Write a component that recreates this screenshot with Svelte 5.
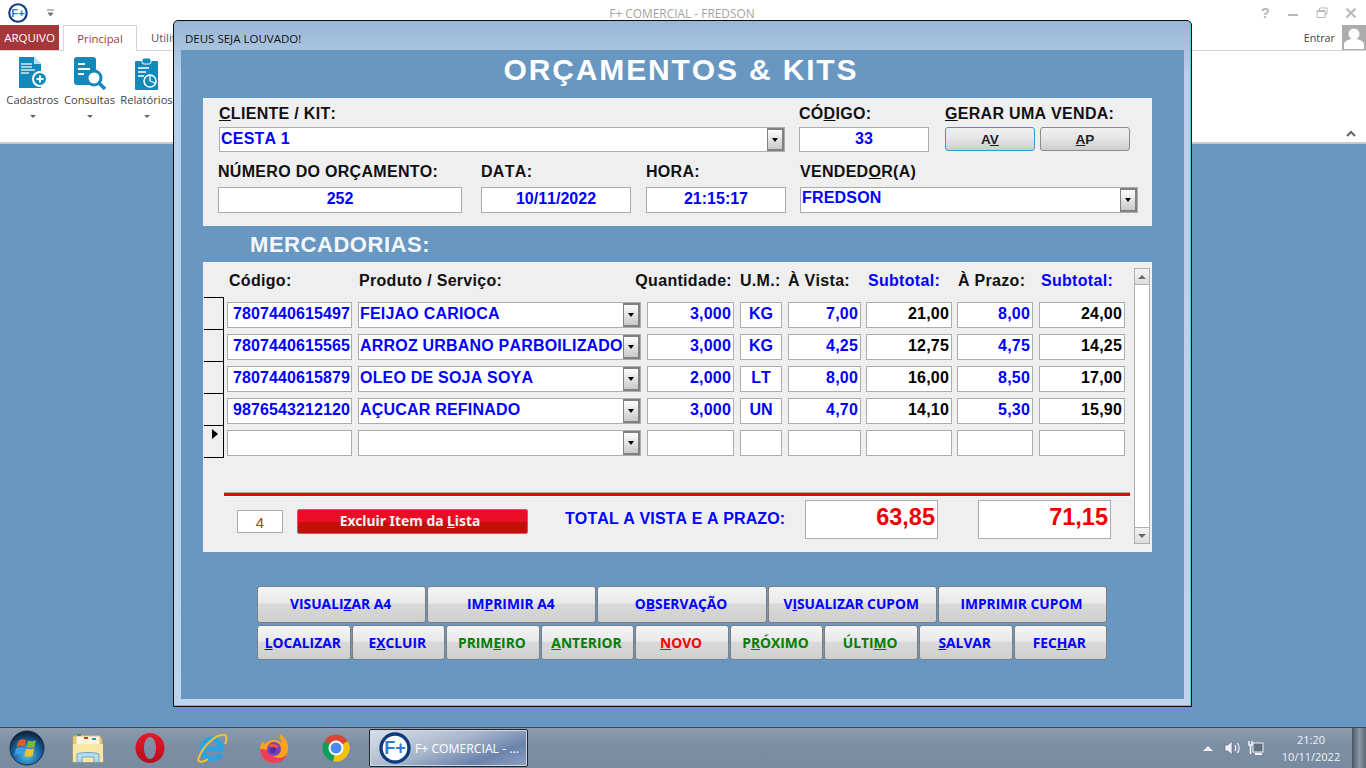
<script lang="ts">
  type Item = { code: string; name: string; qty: string; um: string; cash: string; cashSub: string; term: string; termSub: string }

  const items: Item[] = [
    { code: '7807440615497', name: 'FEIJAO CARIOCA', qty: '3,000', um: 'KG', cash: '7,00', cashSub: '21,00', term: '8,00', termSub: '24,00' },
    { code: '7807440615565', name: 'ARROZ URBANO PARBOILIZADO', qty: '3,000', um: 'KG', cash: '4,25', cashSub: '12,75', term: '4,75', termSub: '14,25' },
    { code: '7807440615879', name: 'OLEO DE SOJA SOYA', qty: '2,000', um: 'LT', cash: '8,00', cashSub: '16,00', term: '8,50', termSub: '17,00' },
    { code: '9876543212120', name: 'AÇUCAR REFINADO', qty: '3,000', um: 'UN', cash: '4,70', cashSub: '14,10', term: '5,30', termSub: '15,90' },
    { code: '', name: '', qty: '', um: '', cash: '', cashSub: '', term: '', termSub: '' },
  ]

  // "_" marks the access key letter
  const topButtons = ['VISUALI_ZAR A4', 'IM_PRIMIR A4', 'O_BSERVAÇÃO', 'V_ISUALIZAR CUPOM', 'IMPRIMIR CUPOM']
  const navButtons = [
    { label: '_LOCALIZAR', tone: 'blue' },
    { label: 'E_XCLUIR', tone: 'blue' },
    { label: 'PRIM_EIRO', tone: 'green' },
    { label: '_ANTERIOR', tone: 'green' },
    { label: '_NOVO', tone: 'red' },
    { label: 'P_RÓXIMO', tone: 'green' },
    { label: 'ÚLTI_MO', tone: 'green' },
    { label: '_SALVAR', tone: 'blue' },
    { label: 'FEC_HAR', tone: 'blue' },
  ]

  function parts(label: string) {
    const i = label.indexOf('_')
    if (i < 0) return [label, '', '']
    return [label.slice(0, i), label[i + 1], label.slice(i + 2)]
  }
</script>

{#snippet key(label: string)}
  {@const p = parts(label)}
  {p[0]}<u>{p[1]}</u>{p[2]}
{/snippet}

{#snippet combo(text: string, cls: string)}
  <div class="field combo {cls}">
    <span class="combo-text">{text}</span>
    <span class="drop"><i></i></span>
  </div>
{/snippet}

{#snippet logo(size: number)}
  <svg width={size} height={size} viewBox="0 0 32 32">
    <circle cx="16" cy="16" r="14" fill="#fff" stroke="#0d3b82" stroke-width="3.4" />
    <text x="16" y="22" text-anchor="middle" font-family="Liberation Sans" font-weight="700" font-size="18" fill="#2a7bd8">F+</text>
  </svg>
{/snippet}

<div class="screen">
  <header class="titlebar">
    <div class="qat">
      {@render logo(20)}
      <svg class="qat-more" width="9" height="9" viewBox="0 0 9 9"><path d="M1 2h7M2 5h5L4.500 8z" stroke="#777" fill="#777" stroke-width="1" /></svg>
    </div>
    <span class="app-title">F+ COMERCIAL - FREDSON</span>
    <div class="win-ctrl">
      <span class="help">?</span>
      <svg width="12" height="12" viewBox="0 0 12 12"><rect x="1" y="7" width="10" height="2" fill="#b8b8b8" /></svg>
      <svg width="12" height="12" viewBox="0 0 12 12"><path d="M3.500 3V1h7.500v6H9M1 3.500h8v7H1z" fill="none" stroke="#b8b8b8" /><rect x="1" y="3" width="8" height="2" fill="#b8b8b8" /></svg>
      <svg width="12" height="12" viewBox="0 0 12 12"><path d="M1.500 1.500l9 9M10.500 1.500l-9 9" stroke="#b8b8b8" stroke-width="2" /></svg>
    </div>
  </header>

  <nav class="tabs">
    <span class="tab-file">ARQUIVO</span>
    <span class="tab-on">Principal</span>
    <span class="tab">Utilitários</span>
    <span class="user">Entrar</span>
    <span class="avatar">
      <svg width="24" height="24" viewBox="0 0 24 24"><circle cx="12" cy="9" r="5.500" fill="#fff" /><path d="M2 24v-4c0-4 4-5 7-6h6c3 1 7 2 7 6v4z" fill="#fff" /></svg>
    </span>
  </nav>

  <section class="ribbon">
    <div class="rb-item">
      <svg width="30" height="33" viewBox="0 0 30 33">
        <path d="M1 0h15l7 7v24H1z" fill="#1289ba" />
        <path d="M16 0l7 7h-7z" fill="#bfe0ee" />
        <path d="M3 7h11M3 10h11M3 13h14M3 16h8" stroke="#cfe8f2" stroke-width="1.300" />
        <circle cx="22" cy="22" r="7" fill="#1289ba" stroke="#fff" stroke-width="2" />
        <path d="M18.500 22h7M22 18.500v7" stroke="#fff" stroke-width="2" />
      </svg>
      <span>Cadastros</span>
      <i class="caret"></i>
    </div>
    <div class="rb-item">
      <svg width="32" height="33" viewBox="0 0 32 33">
        <rect x="0" y="0" width="22" height="28" rx="3" fill="#1289ba" />
        <path d="M4 7h7M4 12h12M4 17h6" stroke="#fff" stroke-width="2" />
        <circle cx="20" cy="21" r="7" fill="#fff" stroke="#1289ba" stroke-width="3" />
        <path d="M25 26l6 6" stroke="#1289ba" stroke-width="3.500" />
      </svg>
      <span>Consultas</span>
      <i class="caret"></i>
    </div>
    <div class="rb-item">
      <svg width="26" height="33" viewBox="0 0 26 33">
        <rect x="1" y="4" width="23" height="29" rx="1" fill="#1289ba" />
        <rect x="8" y="1" width="9" height="6" rx="2" fill="#1289ba" stroke="#fff" />
        <path d="M4 11h11M4 15h8M4 19h6" stroke="#fff" stroke-width="1.500" />
        <circle cx="16" cy="24" r="6" fill="none" stroke="#fff" stroke-width="1.500" />
        <path d="M16 24v-6M16 24l5 2" stroke="#fff" stroke-width="1.300" />
      </svg>
      <span>Relatórios</span>
      <i class="caret"></i>
    </div>
    <svg class="collapse" width="10" height="7" viewBox="0 0 10 7"><path d="M1 6l4-4 4 4" fill="none" stroke="#666" stroke-width="2" /></svg>
  </section>

  <main class="desktop"></main>

  <footer class="taskbar">
    <span class="orb">
      <svg width="36" height="36" viewBox="0 0 36 36">
        <defs>
          <radialGradient id="orbfill" cx="50%" cy="70%" r="65%">
            <stop offset="0" stop-color="#57c3ea" />
            <stop offset="0.6" stop-color="#17639f" />
            <stop offset="1" stop-color="#10233f" />
          </radialGradient>
        </defs>
        <circle cx="18" cy="18" r="17" fill="url(#orbfill)" stroke="#1a2d45" />
        <path d="M9 11c3-2 6-2 8-1l-1.500 6.500c-2-1-5-1-8 .5z" fill="#e85a2a" />
        <path d="M19 10.500c3 1 5 1 8-.5l-1.500 7c-3 1.300-5 1-8 0z" fill="#7db63c" />
        <path d="M7 18.500c3-1.500 5-1.500 8-.5l-1.500 7c-3-1-5-1-8 .5z" fill="#3b9fe0" />
        <path d="M17 18.500c3 1 5 1 8 0L23.500 26c-3 1.200-5 1-8 0z" fill="#f3c22d" />
      </svg>
    </span>
    <span class="app">
      <svg width="32" height="32" viewBox="0 0 32 32">
        <path d="M1 4h11l2 2h16l1 24H1z" fill="#ecd27f" stroke="#c2a75c" />
        <rect x="4" y="4" width="24" height="9" fill="#fbf5d9" stroke="#d4c48c" />
        <rect x="5" y="2" width="4" height="2" fill="#31a34a" />
        <rect x="12" y="5" width="4" height="2" fill="#c8392b" />
        <rect x="20" y="6" width="4" height="2" fill="#2a8fd6" />
        <path d="M1 12h30v18H1z" fill="#f8e7a6" />
        <path d="M5 22c4-2 18-2 22 0v8h-5v-5H10v5H5z" fill="#b5dcf0" stroke="#6da6c9" />
      </svg>
    </span>
    <span class="app">
      <svg width="30" height="32" viewBox="0 0 30 32">
        <defs>
          <linearGradient id="operared" x1="0" y1="0" x2="0" y2="1">
            <stop offset="0" stop-color="#e21a2a" />
            <stop offset="1" stop-color="#b80f1c" />
          </linearGradient>
        </defs>
        <path d="M15 1c8 0 14.500 6.500 14.500 15S23 31 15 31 .500 24.500 .500 16 7 1 15 1zm0 4c-3.500 0-6 5-6 11s2.500 11 6 11 6-5 6-11-2.500-11-6-11z" fill="url(#operared)" fill-rule="evenodd" />
      </svg>
    </span>
    <span class="app">
      <svg width="32" height="32" viewBox="0 0 32 32">
        <path d="M8 17h17c0-6-4-10-9-10s-10 4-10 10 5 10 10 10c4 0 7-1.500 9-5" fill="none" stroke="#2ba3e3" stroke-width="5" />
        <path d="M29 3C21 1 6 14 2 28c1 3 6 2 10-1M29 3c2 1 2 5 0 9" fill="none" stroke="#f2c22d" stroke-width="2" />
      </svg>
    </span>
    <span class="app">
      <svg width="32" height="32" viewBox="0 0 32 32">
        <path d="M22 2c6 4 9 10 8 16-1 8-7 13-14 13C8 31 2 25 2 17c0-3 1-6 3-8 0 2 1 3 2 3 2-3 6-4 8-4 3 0 7 1 9 3-1-4-3-6-2-9z" fill="#f9a21a" />
        <path d="M2 17c0 8 6 14 14 14 6 0 11-3 13-9-3 4-8 5-12 3-4-1-6-4-6-7z" fill="#ee3e5c" />
        <circle cx="16" cy="17" r="7" fill="#7a3fc1" />
        <path d="M10 13c4-2 9-1 11 2l-5 1c-2-1-4-1-6-3z" fill="#f25a2c" />
        <circle cx="15" cy="18" r="3" fill="#4a2fa8" />
      </svg>
    </span>
    <span class="app">
      <svg width="30" height="30" viewBox="0 0 30 30">
        <path d="M15 15L3.300 8.200A13.500 13.500 0 0 1 26.700 8.200z" fill="#db4437" />
        <path d="M15 15L26.700 8.200A13.500 13.500 0 0 1 12 28.200z" fill="#f4c20d" />
        <path d="M15 15L12 28.200A13.500 13.500 0 0 1 3.300 8.200z" fill="#0f9d58" />
        <circle cx="15" cy="15" r="6.500" fill="#4a8bf0" stroke="#fff" stroke-width="2" />
      </svg>
    </span>
    <div class="task-btn">
      {@render logo(32)}
      <span>F+ COMERCIAL - ...</span>
    </div>
    <div class="tray">
      <svg width="10" height="6" viewBox="0 0 10 6"><path d="M0 6l5-5 5 5z" fill="#f2f2f2" /></svg>
      <svg class="speaker" width="17" height="16" viewBox="0 0 17 16"><path d="M1 5h3l4-4v14l-4-4H1z" fill="#eef2f6" stroke="#59606a" stroke-width=".6" /><path d="M11 5c1 2 1 4 0 6M13.500 3c2 3 2 7 0 10" fill="none" stroke="#eef2f6" stroke-width="1.200" /></svg>
      <svg class="net" width="16" height="16" viewBox="0 0 16 16"><rect x="5" y="3" width="10" height="9" fill="#5f7080" stroke="#f2f2f2" /><path d="M7 14h7" stroke="#f2f2f2" stroke-width="2" /><path d="M1 1v4h3V1M2.500 5v9" fill="none" stroke="#f2f2f2" stroke-width="1.500" /></svg>
      <div class="clock"><span>21:20</span><span>10/11/2022</span></div>
      <span class="show-desk"></span>
    </div>
  </footer>

  <article class="window">
    <div class="win-title">DEUS SEJA LOUVADO!</div>
    <div class="client">
      <h1>ORÇAMENTOS &amp; KITS</h1>

      <section class="panel head-panel">
        <div class="row-a">
          <div class="col">
            <span class="lbl"><u>C</u>LIENTE / KIT:</span>
            {@render combo('CESTA 1', '')}
          </div>
          <div class="col">
            <span class="lbl">CÓ<u>D</u>IGO:</span>
            <div class="field center">33</div>
          </div>
          <div class="col">
            <span class="lbl"><u>G</u>ERAR UMA VENDA:</span>
            <div class="sale">
              <button type="button" class="sale-btn focus">A<u>V</u></button>
              <button type="button" class="sale-btn"><u>A</u>P</button>
            </div>
          </div>
        </div>
        <div class="row-b">
          <div class="col">
            <span class="lbl">NÚMERO DO ORÇAMENTO:</span>
            <div class="field center">252</div>
          </div>
          <div class="col">
            <span class="lbl">DATA:</span>
            <div class="field center">10/11/2022</div>
          </div>
          <div class="col">
            <span class="lbl">HORA:</span>
            <div class="field center">21:15:17</div>
          </div>
          <div class="col">
            <span class="lbl">VENDED<u>O</u>R(A)</span>
            {@render combo('FREDSON', '')}
          </div>
        </div>
      </section>

      <h2>MERCADORIAS:</h2>

      <section class="panel list-panel">
        <div class="list">
          <div class="cells heads">
            <span class="h" style="padding-left: 2px">Código:</span>
            <span class="h" style="padding-left: 1px">Produto / Serviço:</span>
            <span class="h end">Quantidade:</span>
            <span class="h">U.M.:</span>
            <span class="h">À Vista:</span>
            <span class="h b" style="padding-left: 2px">Subtotal:</span>
            <span class="h" style="padding-left: 1px">À Prazo:</span>
            <span class="h b" style="padding-left: 2px">Subtotal:</span>
          </div>
          {#each items as it, i}
            <div class="item">
              <div class="selector" class:last={i === items.length - 1}>
                {#if i === items.length - 1}<i class="arrow"></i>{/if}
              </div>
              <div class="cells">
                <div class="field code">{it.code}</div>
                {@render combo(it.name, 'prod')}
                <div class="field num">{it.qty}</div>
                <div class="field center">{it.um}</div>
                <div class="field num">{it.cash}</div>
                <div class="field num dark">{it.cashSub}</div>
                <div class="field num">{it.term}</div>
                <div class="field num dark">{it.termSub}</div>
              </div>
            </div>
          {/each}
          <div class="rule"></div>
          <div class="totals">
            <div class="count">4</div>
            <button type="button" class="del">Excluir Item da <u>L</u>ista</button>
            <span class="total-lbl">TOTAL A VISTA E A PRAZO:</span>
            <div class="sum">63,85</div>
            <div class="sum">71,15</div>
          </div>
        </div>
        <div class="scroll">
          <span class="sb-btn"><i class="up"></i></span>
          <span class="sb-btn"><i class="down"></i></span>
        </div>
      </section>

      <div class="actions top">
        {#each topButtons as b}
          <button type="button" class="act blue">{@render key(b)}</button>
        {/each}
      </div>
      <div class="actions nav">
        {#each navButtons as b}
          <button type="button" class="act {b.tone}">{@render key(b.label)}</button>
        {/each}
      </div>
    </div>
  </article>
</div>

<style>
  :global(body) {
    margin: 0;
  }
  .screen {
    position: relative;
    width: 1366px;
    height: 768px;
    overflow: hidden;
    display: flex;
    flex-direction: column;
    background: #fff;
    font-family: 'Open Sans', sans-serif;
  }

  /* office style shell */
  .titlebar {
    height: 25px;
    display: flex;
    align-items: center;
    justify-content: space-between;
    padding: 0 9px 0 8px;
    position: relative;
  }
  .qat {
    display: flex;
    align-items: center;
    gap: 18px;
  }
  .app-title {
    position: absolute;
    left: 0;
    right: 0;
    text-align: center;
    font-size: 11.9px;
    color: #a3a3a3;
    padding-right: 2px;
  }
  .win-ctrl {
    display: flex;
    align-items: center;
    gap: 17px;
  }
  .help {
    font: 700 15px 'Liberation Sans', sans-serif;
    color: #b8b8b8;
  }
  .tabs {
    height: 25px;
    display: flex;
    align-items: stretch;
    border-bottom: 1px solid #d4d4d4;
    font-size: 11.3px;
    position: relative;
  }
  .tab-file {
    width: 59px;
    height: 25px;
    background: #a4373a;
    color: #fff;
    display: flex;
    align-items: center;
    justify-content: center;
    font-size: 11.5px;
  }
  .tab-on {
    width: 72px;
    height: 25px;
    margin-left: 4px;
    border: 1px solid #d4d4d4;
    border-bottom: none;
    background: #fff;
    color: #a4373a;
    display: flex;
    align-items: center;
    justify-content: center;
  }
  .tab {
    margin-left: 14px;
    color: #555;
    display: flex;
    align-items: center;
  }
  .user {
    margin-left: auto;
    color: #444;
    font-size: 10.8px;
    display: flex;
    align-items: center;
  }
  .avatar {
    width: 24px;
    height: 25px;
    margin-left: 7px;
    background: #acacac;
    overflow: hidden;
  }
  .ribbon {
    display: flex;
    position: relative;
    padding-left: 4px;
    border-bottom: 2px solid #c9c9c9;
    box-sizing: border-box;
    height: 93px;
  }
  .rb-item {
    width: 57px;
    padding-top: 6px;
    display: flex;
    flex-direction: column;
    align-items: center;
    font-size: 11.2px;
    color: #444;
  }
  .rb-item span {
    margin-top: 2px;
    line-height: 16px;
    white-space: nowrap;
  }
  .caret {
    margin-top: 7px;
    border: 3px solid transparent;
    border-top: 3px solid #666;
    border-bottom: none;
  }
  .collapse {
    position: absolute;
    right: 10px;
    bottom: 5px;
  }
  .desktop {
    flex: 1;
    background: #6897c2;
  }
  .taskbar {
    height: 41px;
    box-sizing: border-box;
    border-top: 1px solid #3d4855;
    background: linear-gradient(#8b9cae, #7c8ea3 45%, #798ba0);
    display: flex;
    align-items: center;
    color: #fff;
  }
  .orb {
    width: 36px;
    margin-left: 9px;
    display: flex;
  }
  .app {
    width: 62px;
    display: flex;
    justify-content: center;
  }
  .app:nth-child(2) {
    margin-left: 12px;
  }
  .task-btn {
    margin-left: 2px;
    width: 159px;
    height: 38px;
    flex: none;
    box-sizing: border-box;
    border: 1px solid #20262e;
    border-radius: 2px;
    outline: 1px solid #cfd8e3;
    outline-offset: -2px;
    background: linear-gradient(160deg, #d9e0ea, #a9b7cc 45%, #6b83ad 75%, #8da0c0);
    display: flex;
    align-items: center;
    gap: 4px;
    padding-left: 9px;
    font-size: 12.2px;
    white-space: nowrap;
    overflow: hidden;
    color: #fff;
  }
  .tray {
    margin-left: auto;
    display: flex;
    align-items: center;
    height: 100%;
  }
  .speaker {
    margin-left: 11px;
  }
  .net {
    margin-left: 7px;
  }
  .clock {
    width: 82px;
    margin-left: 6px;
    display: flex;
    flex-direction: column;
    align-items: center;
    font-size: 11px;
    line-height: 17px;
    color: #eef2f6;
  }
  .show-desk {
    width: 13px;
    height: 100%;
    border-left: 1px solid #48535f;
    background: linear-gradient(90deg, #56616e, #8b97a5 50%, #5c6773);
  }

  /* the form window */
  .window {
    position: absolute;
    left: 173px;
    top: 20px;
    width: 1019px;
    height: 687px;
    box-sizing: border-box;
    border: 1px solid #0c0c0c;
    border-radius: 5px 5px 0 0;
    box-shadow: inset -1px -1px 0 #55c6ea;
    background: linear-gradient(#9ab6d5, #b5d0ea 8%, #bcd5ec);
    padding: 0 7px 7px;
    display: flex;
    flex-direction: column;
  }
  .win-title {
    height: 29px;
    line-height: 35px;
    padding-left: 4px;
    font-size: 11.5px;
    color: #111;
    white-space: nowrap;
  }
  .client {
    flex: 1;
    background: #6897c2;
    font-family: 'Liberation Sans', Arial, sans-serif;
    font-kerning: none;
    padding: 0 32px 0 22px;
    display: flex;
    flex-direction: column;
  }
  h1 {
    margin: 0;
    height: 48px;
    line-height: 40px;
    text-align: center;
    font-size: 30px;
    font-weight: 700;
    color: #fff;
    letter-spacing: 1.85px;
    padding-left: 7px;
  }
  h2 {
    margin: 0;
    height: 36px;
    line-height: 38px;
    padding-left: 47px;
    font-size: 22px;
    color: #f4f7fa;
    font-weight: 700;
    letter-spacing: .55px;
  }
  .panel {
    background: #efefef;
    width: 949px;
    flex: none;
    box-sizing: border-box;
  }
  .lbl {
    height: 24px;
    line-height: 22px;
    font-size: 16px;
    font-weight: 700;
    color: #111;
    white-space: nowrap;
    letter-spacing: .3px;
  }
  .col {
    display: flex;
    flex-direction: column;
    min-width: 0;
    box-sizing: border-box;
  }
  .head-panel {
    height: 128px;
    padding-top: 5px;
  }
  .row-a {
    display: grid;
    grid-template-columns: 580px 146px 185px;
    padding-left: 16px;
  }
  .row-a .col:nth-child(1) {
    padding-right: 14px;
  }
  .row-a .col:nth-child(2) {
    padding-right: 16px;
  }
  .row-a .field {
    height: 25px;
  }
  .row-b {
    display: grid;
    grid-template-columns: 263px 165px 154px 338px;
    margin-top: 9px;
    padding-left: 15px;
  }
  .row-b .col:nth-child(1) {
    padding-right: 19px;
  }
  .row-b .col:nth-child(2) {
    padding-right: 15px;
  }
  .row-b .col:nth-child(3) {
    padding-right: 14px;
  }
  .row-b .lbl {
    height: 26px;
  }
  .row-b .combo {
    line-height: 20px;
  }
  .field {
    height: 26px;
    box-sizing: border-box;
    border: 1px solid #acacac;
    background: #fff;
    color: #0000ff;
    font-size: 16px;
    font-weight: 700;
    line-height: 22px;
    white-space: nowrap;
    overflow: hidden;
  }
  .center {
    text-align: center;
  }
  .num {
    text-align: right;
    padding-right: 2px;
    letter-spacing: .2px;
  }
  .dark {
    color: #000;
  }
  .code {
    padding-left: 5px;
    letter-spacing: .1px;
  }
  .combo {
    display: flex;
    align-items: stretch;
    padding-left: 1px;
    letter-spacing: .2px;
  }
  .combo-text {
    flex: 1;
    min-width: 0;
    overflow: hidden;
  }
  .drop {
    width: 17px;
    flex: none;
    box-sizing: border-box;
    border: 2px solid #808080;
    border-left-width: 1px;
    background: linear-gradient(#fdfdfd, #c9c9c9);
    display: flex;
    align-items: center;
    justify-content: center;
  }
  .drop i {
    border: 3.5px solid transparent;
    border-top: 4px solid #000;
    border-bottom: none;
  }
  .sale {
    display: flex;
    gap: 5px;
  }
  .sale-btn {
    width: 90px;
    height: 24px;
    padding: 0;
    box-sizing: border-box;
    border: 1px solid #8c8c8c;
    border-radius: 3px;
    background: linear-gradient(#f0f0f0, #e6e6e6 45%, #cdcdcd);
    font: 700 13.500px 'Liberation Sans', sans-serif;
    color: #222;
  }
  .sale-btn.focus {
    border-color: #2f9fd0;
  }

  .list-panel {
    height: 290px;
    display: flex;
    padding-left: 1px;
  }
  .list {
    width: 926px;
    flex: none;
  }
  .cells {
    display: grid;
    grid-template-columns: 125px 283px 87px 42px 73px 85px 75px 86px;
    column-gap: 6px;
    padding-left: 3px;
    padding-top: 5px;
  }
  .cells > :nth-child(6),
  .cells > :nth-child(7) {
    margin-left: -1px;
  }
  .heads {
    height: 35px;
    box-sizing: border-box;
    padding-top: 9px;
    margin-left: 20px;
  }
  .h {
    font-size: 16px;
    font-weight: 700;
    line-height: 20px;
    color: #111;
    white-space: nowrap;
    letter-spacing: .3px;
  }
  .h.b {
    color: #0000ff;
  }
  .h.end {
    justify-self: end;
    padding-right: 2px;
  }
  .item {
    display: flex;
    height: 32px;
  }
  .selector {
    position: relative;
    width: 20px;
    height: 32px;
    box-sizing: border-box;
    border-top: 1px solid #000;
    border-right: 1px solid #000;
  }
  .selector.last {
    height: 33px;
    border-bottom: 1px solid #000;
  }
  .arrow {
    position: absolute;
    left: 8px;
    top: 3px;
    border: 5px solid transparent;
    border-left: 6px solid #000;
    border-right: none;
  }
  .rule {
    margin: 35px 0 0 20px;
    height: 5px;
    box-sizing: border-box;
    background: #f40000;
    border-top: 1px solid #a9a9a9;
    border-bottom: 1px solid #fff;
  }
  .totals {
    display: flex;
    align-items: flex-start;
    height: 40px;
    margin-top: 3px;
    padding-left: 33px;
  }
  .count {
    width: 46px;
    height: 23px;
    flex: none;
    margin-top: 10px;
    box-sizing: border-box;
    border: 1px solid #acacac;
    background: #fff;
    text-align: center;
    line-height: 23px;
    font-size: 15px;
    color: #c8360e;
  }
  .del {
    margin: 9px 0 0 14px;
    width: 231px;
    height: 25px;
    flex: none;
    padding: 0 5px 3px 0;
    box-sizing: border-box;
    border: 1px solid #7d7d7d;
    border-radius: 2px;
    background: linear-gradient(#ea0d25 50%, #bf1206 55%, #c01005);
    color: #f0f0f0;
    font: 700 13.900px 'Noto Sans', sans-serif;
  }
  .total-lbl {
    margin: 10px 0 0 37px;
    width: 240px;
    flex: none;
    font-size: 16px;
    font-weight: 700;
    color: #0000ff;
    letter-spacing: .1px;
    white-space: nowrap;
  }
  .sum {
    width: 133px;
    height: 39px;
    flex: none;
    margin-right: 40px;
    box-sizing: border-box;
    border: 1px solid #acacac;
    background: #fff;
    text-align: right;
    padding-right: 2px;
    line-height: 32px;
    font-size: 23.500px;
    font-weight: 700;
    color: #f00000;
  }
  .sum:last-child {
    margin-right: 0;
  }
  .scroll {
    width: 16px;
    height: 276px;
    margin: 6px 0 0 4px;
    flex: none;
    box-sizing: border-box;
    border: 1px solid #b0b0b0;
    background: #fff;
    display: flex;
    flex-direction: column;
    justify-content: space-between;
  }
  .sb-btn {
    height: 15px;
    background: linear-gradient(#f4f4f4, #dcdcdc);
    border-bottom: 1px solid #b0b0b0;
    display: flex;
    align-items: center;
    justify-content: center;
  }
  .sb-btn:last-child {
    border-bottom: none;
    border-top: 1px solid #b0b0b0;
  }
  .up {
    border: 4px solid transparent;
    border-bottom: 4px solid #6b6b6b;
    border-top: none;
  }
  .down {
    border: 4px solid transparent;
    border-top: 4px solid #6b6b6b;
    border-bottom: none;
  }

  .actions {
    display: flex;
    gap: 1px;
    margin-left: 54px;
    width: 850px;
  }
  .actions.top {
    margin-top: 34px;
  }
  .actions.nav {
    margin-top: 2px;
  }
  .act {
    flex: 1;
    padding: 0 2px 0 0;
    box-sizing: border-box;
    border: 1px solid #7f7f7f;
    border-radius: 3px;
    background: linear-gradient(#f5f5f5, #e9e9e9 45%, #d9d9d9 50%, #cfcfcf);
    font: 700 13.800px 'Open Sans', sans-serif;
    white-space: nowrap;
  }
  .top .act {
    height: 37px;
    padding-bottom: 2px;
  }
  .nav .act {
    height: 35px;
  }
  .blue {
    color: #0000ff;
  }
  .green {
    color: #007f00;
  }
  .red {
    color: #ff0000;
  }
</style>
